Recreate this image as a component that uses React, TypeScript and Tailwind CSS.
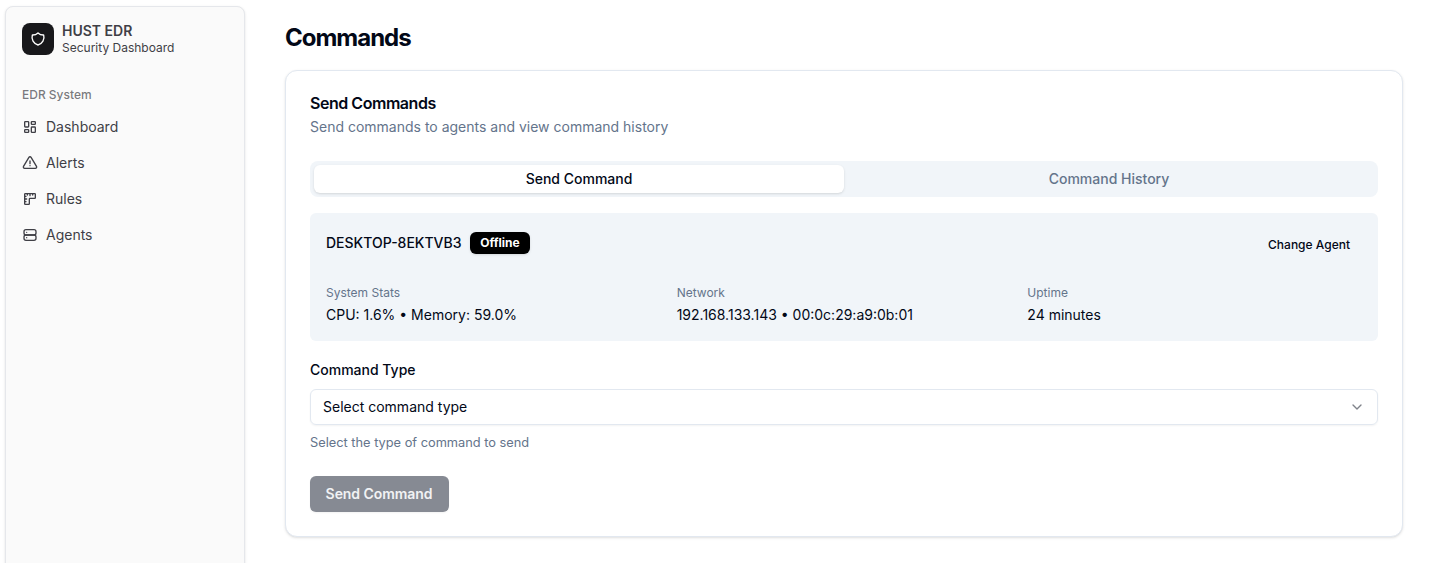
import { TbShield, TbLayoutDashboard, TbAlertTriangle, TbRuler, TbServer } from "react-icons/tb";
import { ChevronDown } from "lucide-react";

const nav = [
  { label: "Dashboard", icon: <TbLayoutDashboard size={16} /> },
  { label: "Alerts", icon: <TbAlertTriangle size={16} /> },
  { label: "Rules", icon: <TbRuler size={16} /> },
  { label: "Agents", icon: <TbServer size={16} /> },
];

const stats = [
  { label: "System Stats", value: "CPU: 1.6% • Memory: 59.0%" },
  { label: "Network", value: "192.168.133.143 • 00:0c:29:a9:0b:01" },
  { label: "Uptime", value: "24 minutes" },
];

export default function App() {
  return (
    <div className="flex h-[563px] overflow-hidden bg-white font-['Inter',sans-serif] text-sm text-[#020817]">
      <aside className="mt-1.5 ml-[5px] h-[600px] w-60 shrink-0 rounded-lg border border-gray-200 bg-[#fafafa] p-2 text-[#3f3f46] shadow-sm">
        <div className="flex h-12 items-center gap-2 px-2">
          <div className="flex size-8 items-center justify-center rounded-lg bg-[#18181b] text-white"><TbShield size={16} /></div>
          <div className="flex flex-col">
            <span className="text-sm leading-[17.5px] font-semibold">HUST EDR</span>
            <span className="text-xs leading-4">Security Dashboard</span>
          </div>
        </div>
        <div className="mt-4 flex h-8 items-center px-2 text-xs font-medium text-[#3f3f46]/70">EDR System</div>
        <nav className="flex flex-col gap-1">
          {nav.map((n) => (
            <a key={n.label} className="flex h-8 items-center gap-2 px-2">{n.icon}<span>{n.label}</span></a>
          ))}
        </nav>
      </aside>
      <main className="ml-10 w-[1118px] shrink-0 pt-[22px]">
        <h1 className="text-2xl leading-8 font-bold tracking-[-0.042em]">Commands</h1>
        <section className="mt-4 h-[467px] rounded-xl border border-slate-200 bg-white p-6 shadow-sm">
          <h2 className="text-base leading-4 font-semibold tracking-[-0.029em]">Send Commands</h2>
          <p className="mt-1.5 leading-5 text-[#64748b]">Send commands to agents and view command history</p>
          <div className="mt-6 grid h-9 grid-cols-2 rounded-lg bg-[#f1f5f9] p-1 font-medium">
            <div className="flex items-center justify-center rounded-md bg-white shadow-sm">Send Command</div>
            <div className="flex items-center justify-center text-[#64748b]">Command History</div>
          </div>
          <div className="mt-4 h-32 rounded-md bg-[#f1f5f9] p-4">
            <div className="flex h-8 items-center justify-between">
              <div className="-mt-1 flex items-center gap-2"><span className="font-medium">DESKTOP-8EKTVB3</span><span className="w-[60px] rounded-md bg-black py-[3px] pl-px text-center text-xs leading-4 font-bold text-white shadow-sm">Offline</span></div>
              <button className="px-3 text-xs font-medium">Change Agent</button>
            </div>
            <div className="mt-6 grid grid-cols-3 gap-4">
              {stats.map((s) => (
                <div key={s.label}><div className="text-xs leading-4 text-[#64748b]">{s.label}</div><div className="mt-1 leading-5">{s.value}</div></div>
              ))}
            </div>
          </div>
          <label className="mt-[22px] block leading-[14px] font-medium">Command Type</label>
          <div className="mt-3 flex h-9 items-center justify-between rounded-md border border-slate-200 px-3 shadow-xs"><span>Select command type</span><ChevronDown size={16} className="opacity-50" /></div>
          <p className="mt-2 text-[12.8px] leading-[19px] text-[#64748b]">Select the type of command to send</p>
          <button className="mt-6 h-9 w-[139px] rounded-md bg-[#868a93] pr-px font-semibold tracking-[-0.005em] text-[#f1f2f4] shadow-xs">Send Command</button>
        </section>
      </main>
    </div>
  );
}
